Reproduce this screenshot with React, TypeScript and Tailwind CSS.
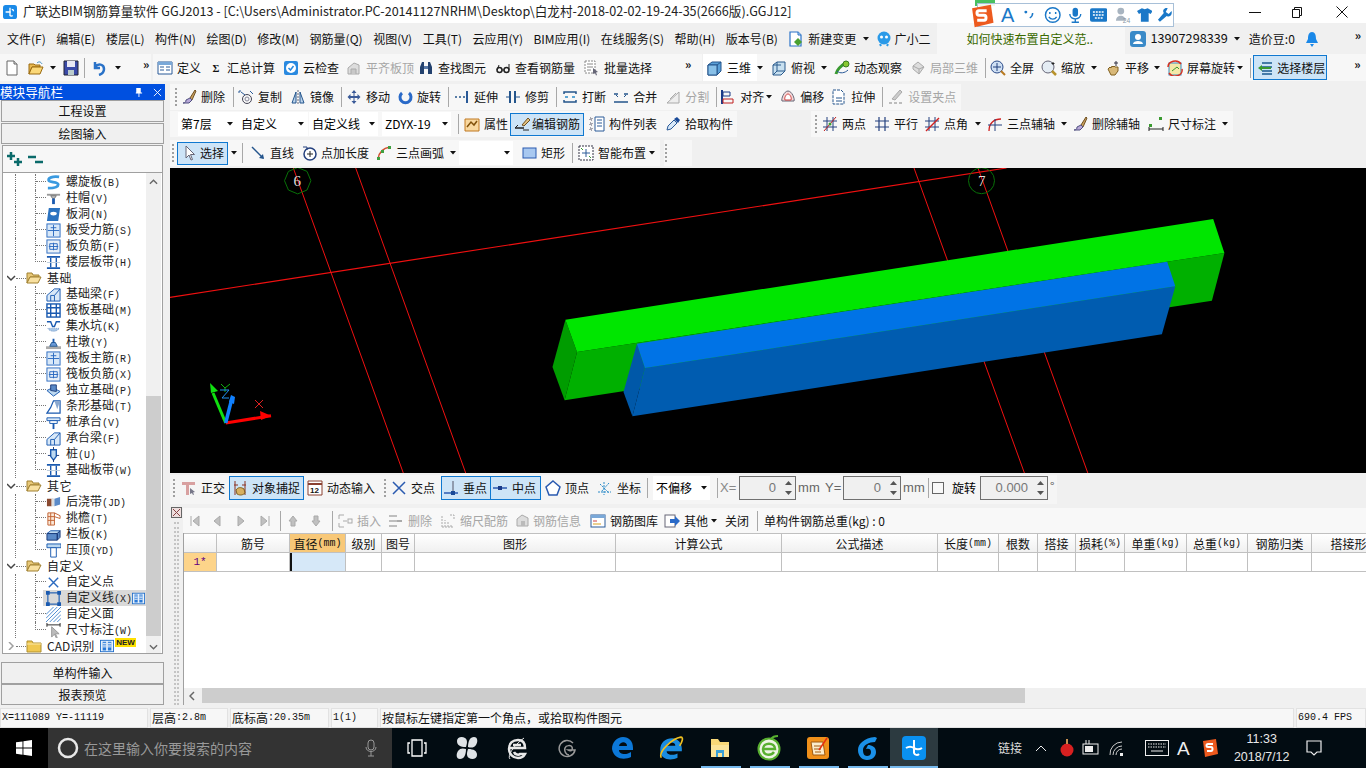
import React from "react";

const sans = "font-['Noto_Sans_CJK_SC','Liberation_Sans',sans-serif]";
const mono = "font-['Liberation_Mono',monospace]";

const icons: Record<string, React.ReactNode> = {
  new: <><path d="M3 1h7l3 3v11H3z" fill="#fff" stroke="#666"/><path d="M10 1v3h3" fill="#ddd" stroke="#666"/></>,
  chg: <><path d="M2 1h8l3 3v11H2z" fill="#fff" stroke="#2a72c8" strokeWidth="1.200"/><path d="M10 1v3h3" fill="#bcd8f0" stroke="#2a72c8"/><path d="M10 7l4 4-4 4-4-4z" fill="#4aa030"/></>,
  open: <><path d="M1 4h5l1 1h5v2H4L1 14z" fill="#e8b850" stroke="#9a6a10"/><path d="M1 14l3-7h11l-3 7z" fill="#fbd878" stroke="#9a6a10"/><path d="M9 3c2-2 4-1 5 1" stroke="#3a8ac0" fill="none"/></>,
  save: <><path d="M1 1h14v14H1z" fill="#3a4aa8" stroke="#223"/><path d="M4 1h8v6H4z" fill="#e8e8f4"/><path d="M5 10h6v5H5z" fill="#bcc" /></>,
  undo: <path d="M4 2v6h5M4 7c3-4 9-3 9 2 0 3-2 5-5 6" stroke="#2a72c8" strokeWidth="2.5" fill="none"/>,
  def: <><path d="M1 2h14v12H1z" fill="#fff" stroke="#2a5a98"/><path d="M1 2h14v3H1z" fill="#7aa8d8"/><path d="M3 7h4M3 10h4M9 7h4M9 10h4" stroke="#2a5a98"/></>,
  sigma: <text x="2" y="13" fontSize="14" fontWeight="700" fontFamily="Liberation Serif" fill="#111">Σ</text>,
  cloud: <><rect x="1" y="1" width="14" height="14" rx="2" fill="#2a8ae0"/><circle cx="8" cy="8" r="5" fill="#fff"/><path d="M5.5 8l2 2 3-4" stroke="#2a8ae0" strokeWidth="1.5" fill="none"/></>,
  flat: <><path d="M2 14V8l6-5 5 2v9z" fill="#ddd" stroke="#aaa"/><path d="M5 14V9h5v5" fill="#c8c8c8" stroke="#aaa"/></>,
  bino: <><path d="M2 14V7l2-5h2v12zM14 14V7l-2-5h-2v12z" fill="#23416e"/><path d="M6 6h4v3H6z" fill="#5a7aa8"/></>,
  glass: <><circle cx="4.5" cy="10" r="2.5" fill="none" stroke="#222" strokeWidth="1.5"/><circle cx="11.5" cy="10" r="2.5" fill="none" stroke="#222" strokeWidth="1.5"/><path d="M7 10h2M2 10l2-5M14 10V4" stroke="#222"/></>,
  batch: <><path d="M1 1h10v12H1z" fill="#fff" stroke="#888" strokeDasharray="2 1"/><path d="M3 4h6M3 7h6M3 10h4" stroke="#888"/><path d="M9 8l5 4-2 .5 1 2.500-1 .500-1-2.500-2 1z" fill="#667"/></>,
  cube: <><path d="M1 5l4-3h9v9l-4 4H1z" fill="#5aa0d8" stroke="#24558c"/><path d="M1 5h9v10M10 5l4-3" stroke="#24558c" fill="none"/><path d="M1 5h9v10H1z" fill="#88c0e8" stroke="#24558c"/></>,
  top: <><path d="M2 5l4-3h8v9l-4 4H2z" fill="#c8e0f0" stroke="#2a5a8c"/><path d="M6 2v9h8M6 11l-4 4" stroke="#2a5a8c" fill="none"/><path d="M2 5h8" stroke="#2a5a8c"/></>,
  orbit: <><path d="M2 14c1-5 6-9 11-12" stroke="#3a9a30" strokeWidth="3" fill="none"/><circle cx="12" cy="4" r="3" fill="#88c830" stroke="#3a7a20"/><path d="M3 11c3 3 8 2 11-1" stroke="#2a5a98" fill="none"/></>,
  local: <><path d="M3 6l5-4 6 5-5 7-6-5z" fill="#ddd" stroke="#aaa"/><path d="M3 6l6 3 5-2M9 9v5" stroke="#aaa" fill="none"/></>,
  full: <><circle cx="7" cy="7" r="6" fill="#cfe0f4" stroke="#2a4a88"/><path d="M7 3v8M3 7h8" stroke="#23407e"/><path d="M11 11l4 4" stroke="#b87a20" strokeWidth="2"/></>,
  zoom: <><circle cx="7" cy="7" r="6" fill="#e4ecf4" stroke="#667"/><path d="M11 11l4 4" stroke="#b8922a" strokeWidth="2.500"/><path d="M12 2v3M10.500 3.500h3" stroke="#222"/></>,
  pan: <><path d="M3 9l2-2 1 1 1-2 1 1 1-1 1 1 3 0v4l-3 4H6z" fill="#d8b878" stroke="#806020"/><path d="M11 1v5M9 3h4" stroke="#334"/></>,
  rot: <><rect x="2" y="3" width="12" height="12" fill="#f4e8a8" stroke="#3a8ac0"/><path d="M1 7a7 6 0 0 1 13-3M15 9a7 6 0 0 1-13 4" stroke="#d83020" strokeWidth="1.500" fill="none"/><path d="M5 11l5-4 2 2" stroke="#3a9a30" fill="none"/></>,
  layer: <><path d="M5 3h10M5 7h10M5 11h10M5 14h10" stroke="#1a5a90" strokeWidth="1.500"/><path d="M1 8l4-3v2h9v2H5v2z" fill="#3a9a30"/></>,
  brush: <><path d="M9 9l5-8 1 1-4 9z" fill="#c8a060" stroke="#705020"/><path d="M2 14c2 0 3-1 3-3l4-2 2 2-3 3z" fill="#b8a8d8" stroke="#505080"/></>,
  copy: <><path d="M1 2h2M1 2v2" stroke="#2a5a98"/><circle cx="9" cy="10" r="4.500" fill="none" stroke="#445"/><circle cx="9" cy="10" r="2" fill="none" stroke="#889"/><path d="M3 3l4 3M12 2l3 3" stroke="#2a5a98"/></>,
  mirror: <><path d="M8 1v14" stroke="#667" strokeDasharray="2 1"/><path d="M6 3v11H2z" fill="#bcd4ec" stroke="#24558c"/><path d="M10 3v11h4z" fill="#bcd4ec" stroke="#24558c"/></>,
  move: <><path d="M8 1l2.500 3h-2v3h3V5l3 3-3 3V9h-3v3h2L8 15l-2.500-3h2V9h-3v2l-3-3 3-3v2h3V4h-2z" fill="#3a5a98"/></>,
  rotate: <path d="M12 4a5.500 5.500 0 1 1-7 0" stroke="#2a6ac8" strokeWidth="3" fill="none" />,
  extend: <><path d="M1 8h2M5 8h2M9 8h2" stroke="#24558c" strokeWidth="1.500"/><path d="M13 2v12" stroke="#2a5a98" strokeWidth="2"/></>,
  trim: <><path d="M5 2v12M10 2v12" stroke="#24558c" strokeWidth="2"/><path d="M1 8h4M10 8h5" stroke="#24558c"/></>,
  brk: <><path d="M2 5v-2h12v2M2 11v2h12v-2" stroke="#24558c" strokeWidth="1.500" fill="none"/><path d="M3 8h3M10 8h3" stroke="#2a8ac8" strokeWidth="1.500"/></>,
  merge: <><path d="M1 13h14M1 5h4M11 5h4" stroke="#24558c" strokeWidth="1.500"/><path d="M5 8l-2-2M11 8l2-2" stroke="#24558c"/></>,
  split: <><path d="M2 14h12L14 3z" fill="#eee" stroke="#aaa"/><path d="M5 10l6-6" stroke="#aaa"/></>,
  align: <><path d="M2 1v14" stroke="#1a3a88" strokeWidth="2"/><path d="M3 3h7v4H3z" fill="none" stroke="#1a3a88"/><path d="M3 10h10v4H3z" fill="none" stroke="#c02020"/></>,
  offset: <><path d="M8 2c4 0 7 8 6 10H2C1 10 4 2 8 2z" fill="#f4d8d8" stroke="#667"/><path d="M8 5c2 0 4 4 3 6H5c-1-2 1-6 3-6z" fill="#fff" stroke="#d04040"/></>,
  stretch: <><path d="M2 1h8l3 3v11H2z" fill="#fff" stroke="#24558c" strokeDasharray="3 1"/><path d="M5 9h6M5 12h6" stroke="#24558c"/></>,
  grip: <><path d="M12 1l2 2-7 8-3-1z" fill="#ccc" stroke="#aaa"/><path d="M1 14h3M6 14h3M11 14h3" stroke="#aaa" strokeWidth="1.500"/></>,
  attr: <><path d="M1 3h14v12H1z" fill="#f8d8a0" stroke="#c07820"/><path d="M3 11l4-5 3 3 3-4" stroke="#80500a" strokeWidth="1.500" fill="none"/></>,
  edit: <><path d="M1 12h9" stroke="#222" strokeWidth="1.500"/><path d="M1 12l3-3" stroke="#222"/><path d="M8 9l6-7 2 2-6 6z" fill="#e0c080" stroke="#705020"/><path d="M9 14h6" stroke="#222"/></>,
  list: <><path d="M1 2h2v2H1zM1 7h2v2H1zM1 12h2v2H1z" fill="none" stroke="#556" strokeDasharray="1 1"/><path d="M6 1h9v14H6z" fill="#fff" stroke="#2a5a98"/><path d="M8 4h5M8 7h5M8 10h5" stroke="#2a5a98"/></>,
  pick: <><path d="M2 14l1-4 6-6 3 3-6 6z" fill="#d8e8f8" stroke="#2a5a98"/><path d="M9 3l3-2 3 3-2 3z" fill="#1a4a98"/></>,
  twop: <><path d="M1 5h14M1 11h14M5 1v14M11 1v14" stroke="#24407e"/><path d="M2 15L14 1" stroke="#c02020"/><circle cx="8" cy="8" r="1.500" fill="#3a9a30"/></>,
  para: <path d="M1 5h14M1 11h14M5 1v14M11 1v14" stroke="#24407e" strokeWidth="1.200"/>,
  angle: <><path d="M1 5h14M1 11h14M5 1v14M11 1v14" stroke="#24407e"/><path d="M2 15L15 2" stroke="#d02020" strokeWidth="1.500"/></>,
  arcx: <><path d="M2 15C2 7 7 3 14 3" stroke="#d02020" strokeWidth="1.300" fill="none"/><path d="M1 9h14M8 3v12" stroke="#24407e"/></>,
  dim: <><path d="M1 13h14M1 11v4M15 11v4" stroke="#222"/><rect x="1" y="8" width="3" height="3" fill="#3a9a30"/><rect x="11" y="1" width="3" height="3" fill="#3a9a30"/></>,
  cursor: <path d="M4 1v12l3-3 2 5 1.500-.5-2-5h4z" fill="#fff" stroke="#667"/>,
  line: <><path d="M2 2l11 11" stroke="#24558c" strokeWidth="1.500"/><path d="M14 14l-5-1 4-4z" fill="#24558c"/></>,
  ptlen: <><circle cx="9" cy="9" r="6" fill="#fff" stroke="#24407e" strokeWidth="1.500"/><path d="M9 6v6M6 9h6" stroke="#222"/><path d="M2 2h4v3" stroke="#24407e" fill="none"/></>,
  arc: <><path d="M2 14C3 7 7 3 14 2" stroke="#d05030" strokeWidth="1.500" fill="none"/><rect x="1" y="12" width="3" height="3" fill="#40a040"/><rect x="5" y="5" width="3" height="3" fill="#40a040"/><rect x="12" y="1" width="3" height="3" fill="#40a040"/></>,
  rect: <><rect x="2" y="3" width="13" height="10" fill="#a8c8f0" stroke="#2a5ab0"/></>,
  smart: <><rect x="1" y="1" width="14" height="14" fill="#fff" stroke="#334" strokeDasharray="2 1"/><path d="M8 4v8M4 8h8" stroke="#2a5a98"/><path d="M3 3l2 2M13 13l-2-2" stroke="#3a9a30"/></>,
  ortho: <><path d="M1 2h13v3H8v10H5V5H1z" fill="#d8a0a0"/><path d="M9 8l5 4-2 .5 1 2-1 .500-1-2-2 1z" fill="#778"/></>,
  snap: <><path d="M3 1v14M13 1v14" stroke="#8a3020" /><path d="M2 5h4M10 5h4" stroke="#8a3020"/><path d="M4 10c2-3 5-3 8-1l1 4c-3 3-6 2-8 1z" fill="#d8b060" stroke="#806020"/></>,
  dyn: <><path d="M1 1h14v14H1z" fill="#fff" stroke="#8a4030"/><path d="M1 4h14" stroke="#8a4030" strokeWidth="2"/><text x="3" y="13" fontSize="8" fontFamily="Liberation Sans" fontWeight="700" fill="#111">12</text></>,
  cross: <path d="M2 2l12 12M14 2L2 14" stroke="#2a5ab0" strokeWidth="1.500"/>,
  perp: <><path d="M1 13h14" stroke="#2a5ab0" strokeWidth="1.500"/><path d="M10 1v14" stroke="#556"/><rect x="8" y="11" width="4" height="4" fill="#1a4a98"/></>,
  mid: <><path d="M1 8h14" stroke="#2a5ab0" strokeWidth="1.500"/><rect x="6" y="6" width="4" height="4" fill="#1a3a88"/></>,
  vertex: <path d="M8 1l7 6-3 8H4L1 7z" fill="#fff" stroke="#2a5ab0" strokeWidth="1.500"/>,
  coord: <><path d="M1 12h13M7 2v13M3 4l9 9M12 3l-8 9" stroke="#2a8ac8" strokeDasharray="2 1"/></>,
  gallery: <><rect x="1" y="2" width="14" height="12" fill="#fff" stroke="#2a5a98"/><path d="M1 2h14v3H1z" fill="#7aa8d8"/><path d="M3 8h4" stroke="#d04040"/><path d="M3 11h8" stroke="#d8a020"/></>,
  other: <><rect x="1" y="2" width="10" height="12" fill="#fff" stroke="#667"/><path d="M6 6h5V3l5 5-5 5v-3H6z" fill="#2a6ac8"/></>,
  insert: <><path d="M2 2h5M2 14h5M2 2v4M2 10v4" stroke="#aaa"/><path d="M6 8h4" stroke="#aaa"/><rect x="11" y="6" width="4" height="4" fill="none" stroke="#aaa"/></>,
  remove: <><path d="M1 3h8M1 13h8M1 8h8" stroke="#aaa" strokeWidth="1.500"/><path d="M9 8h5" stroke="#aaa" strokeWidth="2"/></>,
  scale: <path d="M2 14V3M5 14V7M8 14V9M11 14v-2M2 14h12M10 2h4v4" stroke="#aaa" strokeDasharray="2 1" fill="none"/>,
  info: <><path d="M2 13V6l5-4 6 3v8z" fill="#ddd" stroke="#aaa"/><path d="M6 13V8h4v5" fill="#bbb"/></>,
  folderOpen: <><path d="M1 3h5l1 2h6v2H4L1 13z" fill="#e8c878" stroke="#a08030"/><path d="M1 13l3-6h11l-3 6z" fill="#f8e0a0" stroke="#a08030"/></>,
  folder: <><path d="M1 3h5l1 2h8v9H1z" fill="#f0c850" stroke="#b09030"/><path d="M1 6h14" stroke="#fbe8a8"/></>,
  spiral: <path d="M14 2C7 1 2 3 3 6c1 2 10 1 10 4s-6 4-11 4" stroke="#3a9ae0" strokeWidth="3" fill="none"/>,
  cap: <><path d="M1 3h14v2H1z" fill="#999"/><path d="M5 5h6l-2 3H7z" fill="#bbb" stroke="#777"/><path d="M8 8v6" stroke="#1a5ab0" strokeWidth="3"/></>,
  hole: <><path d="M3 1h12l-2 14H1z" fill="#2a72c0"/><ellipse cx="8" cy="7" rx="3.500" ry="2" fill="#fff"/></>,
  slabA: <><rect x="1" y="1" width="14" height="14" fill="#d8e8f8" stroke="#2a6ac0"/><path d="M8 2v12M2 8h12" stroke="#2a6ac0"/><path d="M5 5h6" stroke="#2a6ac0"/></>,
  slabB: <><rect x="1" y="1" width="14" height="14" fill="#e8f0f8" stroke="#2a6ac0"/><path d="M3 8h10M8 4v8M4 5h8v6H4z" stroke="#2a6ac0" fill="none"/></>,
  band: <><path d="M1 2h14M1 14h14" stroke="#1a5ab0" strokeWidth="2"/><path d="M5 3v10M11 3v10" stroke="#1a5ab0" strokeWidth="1.500"/><path d="M1 8h14" stroke="#bcd" /></>,
  beam: <><path d="M1 15V9L9 2h6v13z" fill="#d8e8f8" stroke="#1a5ab0"/><path d="M5 15V9h4v6M9 9l6-7" stroke="#1a5ab0" fill="none"/></>,
  raft: <><rect x="1" y="1" width="14" height="14" fill="#fff" stroke="#1a5ab0" strokeWidth="1.500"/><path d="M1 5h14M1 11h14M5 1v14M11 1v14" stroke="#1a5ab0" strokeWidth="1.500"/></>,
  sump: <><path d="M1 3h4l2 5h2l2-5h4" stroke="#1a5ab0" strokeWidth="1.500" fill="none"/><path d="M2 10c2 4 10 4 12 0z" fill="#a8c8e8" stroke="#7a9ac8" strokeDasharray="1 1"/></>,
  pier: <><path d="M0 12h16v3H0z" fill="#aaa"/><path d="M4 12l2-4h4l2 4z" fill="#6a9ad8" stroke="#24558c"/><path d="M7 4h2v4H7z" fill="#1a5ab0"/></>,
  iso: <><path d="M1 8l6-3 8 4-7 5z" fill="#bcd8f0" stroke="#1a5ab0"/><path d="M5 8V2h6v7z" fill="#5a8ac8" stroke="#1a3a78"/></>,
  strip: <><path d="M1 15l4-6 3-7h7v13z" fill="#fff" stroke="#1a5ab0" strokeWidth="1.300"/><path d="M9 2l6 0-3 9z" fill="#8aa8d0"/></>,
  pilecap: <><path d="M1 3h14v3H1z" fill="#d8e8f8" stroke="#1a5ab0"/><path d="M4 6h8v3H4z" fill="#fff" stroke="#1a5ab0"/><path d="M7 9h2v6H7z" fill="#1a5ab0"/></>,
  pile: <><path d="M5 3h6v7l-3 4-3-4z" fill="#bcd8f0" stroke="#1a5ab0" strokeWidth="1.500"/><path d="M8 0v3M8 13v3M2 9h3M11 9h3" stroke="#1a3a78"/></>,
  pour: <><path d="M1 4h5v8H1z" fill="#8a4a30"/><path d="M6 3l3 1v8H6z" fill="#ddd"/><path d="M9 4l6-2v8l-6 2z" fill="#5a8ac8"/></>,
  eave: <><path d="M2 2h7v13H2z" fill="#fbe8d8" stroke="#c06030"/><path d="M2 6h7M2 10h7M5 2v13M9 2l6 3v3l-6-2" stroke="#c06030" fill="none"/></>,
  rail: <><path d="M1 7l4-3h10l-3 3z" fill="#bcd8f0" stroke="#1a5ab0"/><path d="M1 7h11v7H1zM12 7l3-3v7l-3 3z" fill="#5a8ac8" stroke="#1a3a78"/></>,
  coping: <><path d="M1 1h15v4H1z" fill="#bcd8f0" stroke="#1a5ab0"/><path d="M5 5h6v10H5z" fill="#fff" stroke="#1a5ab0"/></>,
  xpt: <path d="M3 3l10 10M13 3L3 13" stroke="#2a6ac0" strokeWidth="1.500"/>,
  sel: <><rect x="2" y="2" width="12" height="12" fill="none" stroke="#1a5ab0" strokeWidth="1.200"/><path d="M0 0h4v4H0zM12 0h4v4h-4zM0 12h4v4H0zM12 12h4v4h-4z" fill="#1a5ab0"/></>,
  hatch: <path d="M0 8l8-8M0 12L12 0M0 16L16 0M4 16L16 4M8 16l8-8M12 16l4-4" stroke="#4a8ad0"/>,
  dimarrow: <><path d="M1 2h14M1 0v4M15 0v4" stroke="#222"/><path d="M6 4v11l3-3 2 4 1-.5-2-4h4z" fill="#bbb" stroke="#999"/></>,
  book: <><rect x="0.500" y="1.500" width="15" height="13" fill="#e8f2fc" stroke="#1a6ac8"/><path d="M3 3h4v10H3zM9 3h4v10H9z" fill="#2a7ad8"/><path d="M3 5h4M3 7h4M3 9h4M9 5h4M9 7h4M9 9h4" stroke="#fff"/></>,
};

function Ic({ n, c = "w-4 h-4" }: { n: string; c?: string }) {
  return <svg viewBox="0 0 16 16" className={`${c} shrink-0`}>{icons[n]}</svg>;
}

function Dd({ c = "" }: { c?: string }) {
  return <svg viewBox="0 0 6 4" className={`w-[6px] h-[4px] shrink-0 ${c}`}><path d="M0 0h6L3 3.500z" fill="#111" /></svg>;
}

function T({ i, l, dis, box, c = "" }: { i: string; l: string; dis?: boolean; box?: boolean; c?: string }) {
  return (
    <div className={`flex items-center h-[23px] gap-1 shrink-0 ${box ? "px-[3px] border border-[#0f78d0] bg-[#cde4f7]" : "px-1"} ${dis ? "text-[#a6a6a6]" : "text-[#111]"} ${c}`}>
      <Ic n={i} />
      <span className="whitespace-nowrap">{l}</span>
    </div>
  );
}

function Sep({ c = "" }: { c?: string }) {
  return <div className={`w-px h-[20px] bg-[#a8a8a8] shrink-0 ${c}`} />;
}

function Grip({ c = "" }: { c?: string }) {
  return <div className={`w-[2px] h-[18px] shrink-0 border-l-2 border-dotted border-[#a0a0a0] ${c}`} />;
}

function More({ c = "" }: { c?: string }) {
  return <span className={`text-[12px] leading-none font-bold text-[#111] shrink-0 -mt-2 ${c}`}>»</span>;
}

function Combo({ t, c, dd }: { t: string; c: string; dd: string }) {
  return (
    <div className={`flex items-center h-[24px] bg-white shrink-0 pl-[3px] ${c}`}>
      <span className="whitespace-nowrap">{t}</span>
      <Dd c={`ml-auto ${dd}`} />
    </div>
  );
}

function Row({ n, i, code, last, sel, extra }: { n: string; i: string; code?: string; last?: boolean; sel?: boolean; extra?: React.ReactNode }) {
  return (
    <div className="flex h-4 shrink-0 items-stretch">
      <div className="w-[12px] shrink-0" />
      <div className="w-[20px] shrink-0 border-l border-dotted border-[#777]" />
      <div className={`w-[11px] shrink-0 border-l border-dotted ${last ? "border-transparent" : "border-[#777]"}`}>
        <div className={`h-2 border-b border-dotted border-[#777] ${last ? "border-l -ml-px" : ""}`} />
      </div>
      <div className={`flex items-center flex-1 min-w-0 ${sel ? "bg-[#d9d9d9] -ml-[3px] pl-[3px]" : ""}`}>
        <Ic n={i} c="w-[15px] h-[15px]" />
        <span className="ml-[5px] whitespace-nowrap">{n}<span className={`${mono} text-[10px]`}>{code}</span></span>
        {extra}
      </div>
    </div>
  );
}

function FolderRow({ n, closed, extra }: { n: string; closed?: boolean; extra?: React.ReactNode }) {
  return (
    <div className="flex h-4 shrink-0 items-center">
      <svg viewBox="0 0 9 8" className="w-[9px] h-[8px] ml-[4px] shrink-0">
        <path d={closed ? "M2 0l4 4-4 4" : "M0 2l4 4 4-4"} fill="none" stroke={closed ? "#a0a0a0" : "#444"} strokeWidth="1.500" />
      </svg>
      <div className="w-[10px] h-0 border-t border-dotted border-[#777] shrink-0" />
      <Ic n={closed ? "folder" : "folderOpen"} />
      <span className={`ml-[5px] whitespace-nowrap ${closed ? "" : "tracking-[0.4px]"}`}>{n}</span>
      {extra}
    </div>
  );
}

function TitleBar() {
  return (
    <div className="h-[23px] bg-white flex items-center shrink-0 relative">
      <svg viewBox="0 0 16 16" className="w-[14px] h-[14px] ml-[3px] shrink-0">
        <rect width="16" height="16" rx="3" fill="#1a8ae8" />
        <path d="M8 3v9a2 2 0 0 0 3 0M3 8h6M12 7a2 2 0 0 0-2-2" stroke="#fff" strokeWidth="1.500" fill="none" />
      </svg>
      <span className="ml-[6px] text-[12.600px] whitespace-nowrap text-[#222]">广联达BIM钢筋算量软件 GGJ2013 - [C:\Users\Administrator.PC-20141127NRHM\Desktop\白龙村-2018-02-02-19-24-35(2666版).GGJ12]</span>
      <div className="ml-auto flex items-center shrink-0">
        <svg viewBox="0 0 12 12" className="w-3 h-3 mr-[30px]"><path d="M0 6.500h12" stroke="#111" /></svg>
        <svg viewBox="0 0 12 12" className="w-3 h-3 mr-[33px]"><path d="M1.500 3.500h7v8h-7zM3.500 3.500v-2h7v8h-2" fill="none" stroke="#111" /></svg>
        <svg viewBox="0 0 12 12" className="w-3 h-3 mr-[18px]"><path d="M.5.500l11 11M11.500.500l-11 11" stroke="#111" /></svg>
      </div>
    </div>
  );
}

function SogouBar() {
  return (
    <div className="absolute left-[967px] top-0 w-[208px] h-[28px] overflow-visible">
      <div className="absolute left-[8px] top-0 w-[20px] h-[6px] bg-[#48c060]" />
      <div className="absolute left-[10px] top-[3px] w-[197px] h-[24px] bg-white/90 border border-[#a8c0d8] flex items-center pl-[23px] gap-[7px] text-[#1a78c8]">
        <span className="text-[20px] leading-none font-['Liberation_Sans']">A</span>
        <svg viewBox="0 0 16 16" className="w-4 h-4"><circle cx="5" cy="5" r="1.500" fill="#1a78c8" /><path d="M12 6c0 3-1 4-3 5" stroke="#1a78c8" strokeWidth="1.500" fill="none" /></svg>
        <svg viewBox="0 0 18 18" className="w-[18px] h-[18px]"><circle cx="9" cy="9" r="7.500" fill="none" stroke="#1a78c8" strokeWidth="1.500" /><path d="M6 6v2M12 6v2M5 11c2 3 6 3 8 0" stroke="#1a78c8" strokeWidth="1.500" fill="none" /></svg>
        <svg viewBox="0 0 16 18" className="w-[15px] h-[18px]"><rect x="5" y="1" width="6" height="10" rx="3" fill="#1a78c8" /><path d="M2 8c0 7 12 7 12 0M8 13v4M4 17h8" stroke="#1a78c8" strokeWidth="1.500" fill="none" /></svg>
        <svg viewBox="0 0 18 14" className="w-[18px] h-[14px]"><rect width="18" height="14" rx="2" fill="#1a78c8" /><path d="M3 4h12M3 7h12M5 10h8" stroke="#fff" strokeWidth="1.500" strokeDasharray="2 1" /></svg>
        <svg viewBox="0 0 18 18" className="w-[18px] h-[18px]"><circle cx="7" cy="5" r="3.500" fill="#a8b4c0" /><path d="M2 15c0-7 10-7 10 0z" fill="#a8b4c0" /><text x="9" y="17" fontSize="7" fill="#8a98a8" fontFamily="Liberation Sans">24</text></svg>
        <svg viewBox="0 0 16 16" className="w-4 h-4 -ml-[2px]"><path d="M5 1l3 1 3-1 5 3-2 3-2-1v9H4V6L2 7 0 4z" fill="#1a78c8" /></svg>
        <svg viewBox="0 0 16 16" className="w-4 h-4 -ml-[2px]"><path d="M15 4l-3 3-3-2 2-4c-3-1-6 2-4 5l-6 7 2 2 7-6c3 2 6-1 5-5z" fill="#1a78c8" /></svg>
      </div>
      <svg viewBox="0 0 28 28" className="absolute left-[2px] top-[4px] w-[25px] h-[24px]">
        <path d="M3 5l22-4 3 21-22 5z" fill="#ed5a1e" />
        <path d="M20 8H11c-3 0-3 5 0 5h6c3 0 3 6 0 6H9" stroke="#fff" strokeWidth="3.500" fill="none" />
      </svg>
    </div>
  );
}

function MenuBar() {
  const items = ["文件(F)", "编辑(E)", "楼层(L)", "构件(N)", "绘图(D)", "修改(M)", "钢筋量(Q)", "视图(V)", "工具(T)", "云应用(Y)", "BIM应用(I)", "在线服务(S)", "帮助(H)", "版本号(B)"];
  return (
    <div className="h-[31px] flex items-center shrink-0 pl-[2px] text-[#111]">
      {items.map((m) => (
        <span key={m} className="px-[5px] whitespace-nowrap mr-[0.500px]">{m}</span>
      ))}
      <T i="chg" l="新建变更" c="ml-[1px]" />
      <Dd c="ml-[3px]" />
      <svg viewBox="0 0 16 16" className="w-4 h-4 ml-[7px] shrink-0"><circle cx="8" cy="7" r="6.500" fill="#2a9ae8" /><circle cx="5.500" cy="6" r="1.500" fill="#fff" /><circle cx="10.500" cy="6" r="1.500" fill="#fff" /><path d="M4 13l1 2M12 13l-1 2" stroke="#2a9ae8" strokeWidth="2" /></svg>
      <span className="ml-[2px] whitespace-nowrap">广小二</span>
      <div className="ml-[7px] w-[188px] h-[31px] bg-[#f7f7f7] flex items-center pl-[29px] text-[#3a6a00] whitespace-nowrap shrink-0">如何快速布置自定义范..</div>
      <svg viewBox="0 0 16 16" className="w-4 h-4 ml-[5px] shrink-0"><rect width="16" height="16" rx="3" fill="#3a8ac8" /><circle cx="8" cy="6" r="3" fill="#fff" /><path d="M3 13c0-4 10-4 10 0z" fill="#fff" /></svg>
      <span className="ml-[4px] text-[#111] text-[12.700px]">13907298339</span>
      <Dd c="ml-[6px]" />
      <span className="ml-[9px] whitespace-nowrap">造价豆:0</span>
      <svg viewBox="0 0 14 16" className="w-[14px] h-4 ml-[10px] shrink-0"><path d="M7 1c-3 0-4 3-4 7l-2 4h12l-2-4c0-4-1-7-4-7z" fill="#1a88e8" /><path d="M5 13h4l-2 3z" fill="#1a88e8" /></svg>
      <More c="ml-[36px]" />
    </div>
  );
}

function Toolbar1() {
  return (
    <div className="h-[27px] flex items-stretch shrink-0">
      <div className="w-[151px] bg-[#f7f7f7] flex items-center shrink-0 pl-1">
        <Ic n="new" />
        <Ic n="open" c="w-4 h-4 ml-[8px]" />
        <Dd c="ml-[6px]" />
        <Ic n="save" c="w-4 h-4 ml-[7px]" />
        <Sep c="ml-[5px]" />
        <Ic n="undo" c="w-4 h-4 ml-[6px]" />
        <Dd c="ml-[8px]" />
        <More c="ml-[22px]" />
      </div>
      <div className="w-[549px] ml-[2px] bg-[#f7f7f7] flex items-center shrink-0">
        <T i="def" l="定义" />
        <T i="sigma" l="汇总计算" c="ml-[2px] [&>svg]:w-[12px] -mr-[2px]" />
        <T i="cloud" l="云检查" c="ml-[2px]" />
        <T i="flat" l="平齐板顶" dis c="-ml-[1px] -mr-[2px]" />
        <T i="bino" l="查找图元" c="-ml-[2px]" />
        <T i="glass" l="查看钢筋量" c="ml-[1px]" />
        <T i="batch" l="批量选择" c="ml-[1px]" />
        <More c="ml-[29px]" />
      </div>
      <div className="flex-1 ml-[1px] bg-[#f7f7f7] flex items-center min-w-0">
        <div className="flex items-center bg-white h-[27px] pr-[2px]"><T i="cube" l="三维" /></div>
        <Dd />
        <T i="top" l="俯视" c="ml-[4px]" />
        <Dd c="ml-[2px]" />
        <T i="orbit" l="动态观察" c="ml-[3px]" />
        <T i="local" l="局部三维" dis />
        <Sep c="ml-[3px]" />
        <T i="full" l="全屏" />
        <T i="zoom" l="缩放" c="-ml-[1px]" />
        <Dd c="ml-[2px]" />
        <T i="pan" l="平移" c="ml-[4px]" />
        <Dd c="ml-[1px]" />
        <T i="rot" l="屏幕旋转" c="ml-[3px] -mr-[2px]" />
        <Dd />
        <Sep c="ml-[7px]" />
        <T i="layer" l="选择楼层" box c="!h-[25px] ml-[2px] w-[74px]" />
        <More c="ml-[27px]" />
      </div>
    </div>
  );
}

function Panel() {
  return (
    <div className="w-[165px] shrink-0 flex flex-col h-[621px] text-[#111]">
      <div className="h-4 bg-[#0050e0] text-white flex items-center shrink-0">
        <span className="text-[12.600px] leading-none whitespace-nowrap">模块导航栏</span>
        <svg viewBox="0 0 10 12" className="w-[9px] h-[11px] ml-[71px]"><path d="M2.500 1h5v5h1.500v1h-3v4h-1V7h-3V6H2.500z" fill="#fff" /></svg>
        <svg viewBox="0 0 10 10" className="w-[9px] h-[9px] ml-[10px]"><path d="M1 1l8 8M9 1l-8 8" stroke="#fff" /></svg>
      </div>
      <div className="h-[22px] border border-[#a0a0a0] bg-[#f0f0f0] flex items-center justify-center shrink-0 mx-[1px]">工程设置</div>
      <div className="h-[21px] mt-px border border-[#a0a0a0] bg-[#f0f0f0] flex items-center justify-center shrink-0 mx-[1px]">绘图输入</div>
      <div className="mx-[2px] mt-[1px] h-[27px] bg-[#f7f7f7] border-x border-t border-[#a0a0a0] flex items-center pl-[4px] shrink-0">
        <svg viewBox="0 0 16 16" className="w-4 h-4"><path d="M4 1v8M0 5h8M11 7v8M7 11h8" stroke="#0a6a6a" strokeWidth="2.500" /></svg>
        <svg viewBox="0 0 16 16" className="w-4 h-4 ml-[5px]"><path d="M0 6h8M7 11h8" stroke="#0a6a6a" strokeWidth="2.500" /></svg>
      </div>
      <div className="mx-[2px] h-[482px] bg-white border border-[#a0a0a0] flex shrink-0 overflow-hidden">
        <div className="w-[143px] shrink-0 overflow-hidden flex flex-col text-[12px] leading-4 pt-[1px] text-[#222]">
          <Row n="螺旋板" code="(B)" i="spiral" />
          <Row n="柱帽" code="(V)" i="cap" />
          <Row n="板洞" code="(N)" i="hole" />
          <Row n="板受力筋" code="(S)" i="slabA" />
          <Row n="板负筋" code="(F)" i="slabB" />
          <Row n="楼层板带" code="(H)" i="band" last />
          <FolderRow n="基础" />
          <Row n="基础梁" code="(F)" i="beam" />
          <Row n="筏板基础" code="(M)" i="raft" />
          <Row n="集水坑" code="(K)" i="sump" />
          <Row n="柱墩" code="(Y)" i="pier" />
          <Row n="筏板主筋" code="(R)" i="slabA" />
          <Row n="筏板负筋" code="(X)" i="slabB" />
          <Row n="独立基础" code="(P)" i="iso" />
          <Row n="条形基础" code="(T)" i="strip" />
          <Row n="桩承台" code="(V)" i="pilecap" />
          <Row n="承台梁" code="(F)" i="beam" />
          <Row n="桩" code="(U)" i="pile" />
          <Row n="基础板带" code="(W)" i="band" last />
          <FolderRow n="其它" />
          <Row n="后浇带" code="(JD)" i="pour" />
          <Row n="挑檐" code="(T)" i="eave" />
          <Row n="栏板" code="(K)" i="rail" />
          <Row n="压顶" code="(YD)" i="coping" last />
          <FolderRow n="自定义" />
          <Row n="自定义点" i="xpt" />
          <Row n="自定义线" code="(X)" i="sel" sel extra={<Ic n="book" c="w-[13px] h-[13px]" />} />
          <Row n="自定义面" i="hatch" />
          <Row n="尺寸标注" code="(W)" i="dimarrow" last />
          <FolderRow
            n="CAD识别"
            closed
            extra={
              <div className="flex items-start ml-[6px] shrink-0">
                <Ic n="book" c="w-[14px] h-[14px]" />
                <span className="ml-[1px] -mt-[1px] h-[9px] leading-[9px] px-[1px] bg-[#ffe000] text-[#222] text-[8px] font-bold font-['Liberation_Sans']">NEW</span>
              </div>
            }
          />
        </div>
        <div className="w-[15px] shrink-0 bg-[#f0f0f0] flex flex-col items-center">
          <svg viewBox="0 0 10 6" className="w-[9px] h-[6px] mt-[6px] shrink-0"><path d="M1 5l4-4 4 4" stroke="#666" strokeWidth="1.500" fill="none" /></svg>
          <div className="w-full h-[240px] bg-[#cdcdcd] mt-[211px] shrink-0" />
          <svg viewBox="0 0 10 6" className="w-[9px] h-[6px] mt-[8px] shrink-0"><path d="M1 1l4 4 4-4" stroke="#666" strokeWidth="1.500" fill="none" /></svg>
        </div>
      </div>
      <div className="h-[8px] shrink-0" />
      <div className="h-[22px] border border-[#a0a0a0] bg-[#f0f0f0] flex items-center justify-center shrink-0 mx-[1px]">单构件输入</div>
      <div className="h-[21px] border border-[#a0a0a0] bg-[#f0f0f0] flex items-center justify-center shrink-0 mx-[1px]">报表预览</div>
    </div>
  );
}

function Canvas() {
  return (
    <div className="h-[305px] bg-black shrink-0">
      <svg viewBox="170 168 1196 305" className="w-[1196px] h-[305px] block">
        <g stroke="#f01010" strokeWidth="1" fill="none">
          <path d="M170 297.300L1006.500 168" strokeWidth="1.200" />
          <path d="M293.300 168L403.300 473M355.700 168L465.700 473M914 168L1024.400 473M978 168L1087.800 473" />
        </g>
        <path d="M297.700 167.500l9.300 3.900 3.900 9.300-3.900 9.300-9.300 3.900-9.300-3.900-3.900-9.300 3.900-9.300z" fill="none" stroke="#087008" />
        <ellipse cx="981.500" cy="180.700" rx="13" ry="13" fill="none" stroke="#087008" />
        <text x="293.500" y="186" fontSize="15" fill="#ddd" fontFamily="Liberation Serif">6</text>
        <text x="978" y="186" fontSize="15" fill="#ddd" fontFamily="Liberation Serif">7</text>
        <polygon points="565.400,319.700 577,352 564.600,400.300 552.500,367" fill="#009c00" />
        <polygon points="577,352 1224.400,253 1211.900,300.700 564.600,400.300" fill="#00b000" />
        <polygon points="565.400,319.700 1213.200,219 1224.400,253 577,352" fill="#00e600" />
        <polygon points="636.900,343.700 644.900,368 632.400,416.300 623.500,392" fill="#0058a8" />
        <polygon points="644.900,368 1175.300,286.300 1161.900,334.300 632.400,416.300" fill="#005cb0" />
        <polygon points="636.900,343.700 1167.200,261.700 1175.300,286.300 644.900,368" fill="#0073e6" />
        <path d="M225.700 423L271 415.700" stroke="#ff0000" strokeWidth="3" />
        <polygon points="260,411 271,415.700 261,420" fill="#ff0000" />
        <path d="M225.700 423L213 393" stroke="#10e010" strokeWidth="3" />
        <polygon points="210,383 218,391 211,393" fill="#10e010" />
        <path d="M225.700 423L232 398" stroke="#1080ff" strokeWidth="3.500" />
        <polygon points="231,395 235,397 234,404 229,402" fill="#1080ff" />
        <path d="M255 400l8 8M263 400l-8 8" stroke="#e02020" />
        <path d="M221 384l4 4 5-4M225 388v4" stroke="#10b010" fill="none" />
        <path d="M220 390h9l-7 8h7" stroke="#2090f0" fill="none" />
      </svg>
    </div>
  );
}

function SpinInput({ v, c }: { v: string; c: string }) {
  return (
    <div className={`h-[24px] border border-[#707070] flex items-center justify-end shrink-0 bg-[#f0f0f0] ${c}`}>
      <span className="text-[#777] text-[13px] font-['Liberation_Sans'] mr-[9px]">{v}</span>
      <svg viewBox="0 0 7 16" className="w-[7px] h-4 mr-[3px] shrink-0"><path d="M0 5l3.500-4L7 5zM0 11h7l-3.500 4z" fill="#555" /></svg>
    </div>
  );
}

function SnapBar() {
  return (
    <div className="h-[31px] flex items-center shrink-0 bg-[#f0f0f0]">
      <div className="w-[887px] h-[29px] mt-[2px] pb-[4px] bg-[#f5f5f5] flex items-center shrink-0 pl-[3px]">
        <Grip />
        <T i="ortho" l="正交" c="ml-[2px]" />
        <T i="snap" l="对象捕捉" box c="!px-[2px] !h-[24px] w-[75px]" />
        <T i="dyn" l="动态输入" c="ml-[-1px]" />
        <Grip c="ml-[5px]" />
        <T i="cross" l="交点" c="ml-[1px] !gap-[4px]" />
        <T i="perp" l="垂点" box c="!h-[24px] !px-[1px] ml-[2px] w-[50px]" />
        <T i="mid" l="中点" box c="!h-[24px] !px-[1px] w-[51px] -ml-px" />
        <T i="vertex" l="顶点" />
        <T i="coord" l="坐标" />
        <Sep c="ml-[2px]" />
        <Combo t="不偏移" c="w-[57px] ml-[5px]" dd="mr-[3px]" />
        <Sep c="ml-[7px]" />
        <span className="ml-[2px] text-[#888] text-[13px] font-['Liberation_Sans'] w-[19px] shrink-0">X=</span>
        <SpinInput v="0" c="w-[57px]" />
        <span className="ml-[2px] text-[#666] text-[13px] font-['Liberation_Sans'] w-[27px] shrink-0">mm</span>
        <span className="text-[#666] text-[13px] font-['Liberation_Sans'] w-[18px] shrink-0">Y=</span>
        <SpinInput v="0" c="w-[58px]" />
        <span className="ml-[2px] text-[#666] text-[13px] font-['Liberation_Sans'] w-[25px] shrink-0">mm</span>
        <Sep />
        <div className="w-[12px] h-[12px] ml-[3px] border border-[#666] bg-[#f8f8f8] shrink-0" />
        <span className="ml-[8px] whitespace-nowrap">旋转</span>
        <SpinInput v="0.000" c="w-[68px] ml-[4px]" />
        <span className="ml-[2px] -mt-1 text-[#555]">°</span>
      </div>
    </div>
  );
}

function Nav({ d, c = "" }: { d: string; c?: string }) {
  return <svg viewBox="0 0 12 12" className={`w-3 h-3 shrink-0 ${c}`}><path d={d} fill="#c0c0c0" stroke="#aaa" /></svg>;
}

function RebarBar() {
  return (
    <div className="h-[25px] ml-[13px] bg-[#f8f8f8] flex items-center shrink-0 pl-[6px]">
      <Nav d="M2 1v10M10 1L4 6l6 5z" />
      <Nav d="M9 1L3 6l6 5z" c="ml-[10px]" />
      <Nav d="M3 1l6 5-6 5z" c="ml-[12px]" />
      <Nav d="M10 1v10M2 1l6 5-6 5z" c="ml-[12px]" />
      <Sep c="ml-[9px] mr-[6px]" />
      <Nav d="M6 1l4 5H8v5H4V6H2z" />
      <Nav d="M6 11l4-5H8V1H4v5H2z" c="ml-[11px]" />
      <Sep c="ml-[10px]" />
      <T i="insert" l="插入" dis />
      <T i="remove" l="删除" dis c="-ml-[1px]" />
      <T i="scale" l="缩尺配筋" dis />
      <T i="info" l="钢筋信息" dis c="!gap-[2px] -ml-[1px]" />
      <T i="gallery" l="钢筋图库" c="ml-[1px]" />
      <T i="other" l="其他" c="-ml-[2px]" />
      <Dd c="-ml-[1px]" />
      <span className="ml-[8px] text-[#111] whitespace-nowrap">关闭</span>
      <Sep c="ml-[8px]" />
      <span className="ml-[6px] text-[#111] whitespace-nowrap">单构件钢筋总重(kg) : 0</span>
    </div>
  );
}

const cols: [string, string, string?][] = [
  ["筋号", "w-[73px]"],
  ["直径", "w-[56px]", "(mm)"],
  ["级别", "w-[36px]"],
  ["图号", "w-[33px]"],
  ["图形", "w-[201px]"],
  ["计算公式", "w-[166px]"],
  ["公式描述", "w-[156px]"],
  ["长度", "w-[61px]", "(mm)"],
  ["根数", "w-[39px]"],
  ["搭接", "w-[38px]"],
  ["损耗", "w-[49px]", "(%)"],
  ["单重", "w-[62px]", "(kg)"],
  ["总重", "w-[61px]", "(kg)"],
  ["钢筋归类", "w-[64px]"],
  ["搭接形式", "w-[86px]"],
];

function Table() {
  return (
    <div className="flex-1 flex min-h-0 bg-white">
      <div className="w-[13px] shrink-0 bg-[#f0f0f0] flex flex-col items-center">
        <svg viewBox="0 0 11 11" className="w-[11px] h-[11px] -mt-[26px] shrink-0"><rect x=".5" y=".5" width="10" height="10" fill="#eedede" stroke="#666" /><path d="M2 2l7 7M9 2L2 9" stroke="#844" /></svg>
        <div className="w-[5px] flex-1 mt-[4px] border-x-2 border-dotted border-[#c4c4c4]" />
      </div>
      <div className="flex-1 min-w-0 flex flex-col border-l border-[#a0a0a0]">
        <div className="flex-1 min-h-0 flex flex-col overflow-hidden">
          <div className="flex h-[20px] shrink-0 border-y border-[#c0c0c0] bg-gradient-to-b from-white to-[#f0f0f0]">
            <div className="w-[33px] shrink-0 border-r border-[#c0c0c0]" />
            {cols.map(([a, w, u]) => (
              <div key={a} className={`${w} shrink-0 border-r border-[#c0c0c0] flex items-center justify-center pt-[1px] whitespace-nowrap overflow-hidden text-[#111] ${a === "直径" ? "bg-[#f8c878]" : ""}`}>
                {a}
                {u && <span className={`${mono} text-[10px]`}>{u}</span>}
              </div>
            ))}
          </div>
          <div className="flex h-[19px] shrink-0 border-b border-[#c0c0c0]">
            <div className={`w-[33px] shrink-0 border-r border-[#c0c0c0] bg-[#fdd48a] text-[#600080] flex items-center justify-center pt-[1px] ${mono} text-[11px]`}>1*</div>
            {cols.map(([a, w]) => (
              <div key={a} className={`${w} shrink-0 border-r border-[#c0c0c0] ${a === "直径" ? "bg-[#d6e8f8] border-l-2 border-l-[#111]" : ""}`} />
            ))}
          </div>
        </div>
        <div className="h-[17px] shrink-0 bg-[#f0f0f0] flex items-start">
          <svg viewBox="0 0 6 10" className="w-[6px] h-[10px] ml-[5px] mt-[3px] shrink-0"><path d="M5 1L1 5l4 4" stroke="#666" strokeWidth="1.500" fill="none" /></svg>
          <div className="h-[15px] w-[823px] ml-[7px] bg-[#cdcdcd] shrink-0" />
        </div>
      </div>
    </div>
  );
}

function Status() {
  return (
    <div className="h-[20px] mt-[3px] flex gap-[2px] shrink-0 text-[#111]">
      <div className={`w-[148px] bg-[#f7f7f7] border border-[#e2e2e2] flex items-center pl-[1px] ${mono} text-[10px] whitespace-nowrap`}>X=111089 Y=-11119</div>
      <div className="w-[78px] bg-[#f7f7f7] border border-[#e2e2e2] flex items-center pl-[1px] whitespace-nowrap">层高<span className={`${mono} text-[10px]`}>:2.8m</span></div>
      <div className="w-[99px] bg-[#f7f7f7] border border-[#e2e2e2] flex items-center pl-[1px] whitespace-nowrap">底标高<span className={`${mono} text-[10px]`}>:20.35m</span></div>
      <div className={`w-[47px] bg-[#f7f7f7] border border-[#e2e2e2] flex items-center pl-[1px] ${mono} text-[10px]`}>1(1)</div>
      <div className="w-[914px] bg-[#f7f7f7] border border-[#e2e2e2] flex items-center pl-[1px] whitespace-nowrap">按鼠标左键指定第一个角点，或拾取构件图元</div>
      <div className={`flex-1 bg-[#f7f7f7] border border-[#e2e2e2] flex items-center pl-[1px] ${mono} text-[10px] whitespace-nowrap`}>690.4 FPS</div>
    </div>
  );
}

function Tk({ c = "", on, children }: { c?: string; on?: boolean; children: React.ReactNode }) {
  return (
    <div className={`w-[49px] h-10 shrink-0 flex items-center justify-center relative ${c}`}>
      {children}
      {on && <div className="absolute bottom-0 left-[6px] right-[3px] h-[2px] bg-[#76b9ed]" />}
    </div>
  );
}

function Taskbar() {
  return (
    <div className="h-10 bg-[#020c12] flex items-center shrink-0 text-white">
      <div className="w-[48px] h-10 bg-black flex items-center justify-center shrink-0">
        <svg viewBox="0 0 16 16" className="w-4 h-4"><path d="M0 2.300l6.500-.9v6.200H0zM7.400 1.300L16 0v7.600H7.400zM0 8.500h6.500v6.200L0 13.800zM7.400 8.500H16V16l-8.600-1.200z" fill="#fff" /></svg>
      </div>
      <div className="w-[344px] h-10 bg-[#333333] flex items-center shrink-0 pl-[9px]">
        <svg viewBox="0 0 22 22" className="w-[22px] h-[22px] shrink-0"><circle cx="11" cy="11" r="9" fill="none" stroke="#e8e8e8" strokeWidth="2.500" /></svg>
        <span className="ml-[5px] text-[14px] text-[#999] whitespace-nowrap">在这里输入你要搜索的内容</span>
        <svg viewBox="0 0 12 18" className="w-3 h-[18px] ml-[113px] shrink-0"><rect x="3" y="1" width="6" height="10" rx="3" fill="none" stroke="#999" /><path d="M1 8c0 6 10 6 10 0M6 13v4M3 17h6" stroke="#999" fill="none" /></svg>
      </div>
      <Tk c="!w-[50px]"><svg viewBox="0 0 20 18" className="w-5 h-[18px]"><path d="M5 1h10v16H5zM3 4H1v10h2M17 4h2v10h-2" fill="none" stroke="#fff" strokeWidth="1.300" /></svg></Tk>
      <Tk c="!w-[50px]"><svg viewBox="0 0 22 24" className="w-[22px] h-6"><path d="M10 11C4 11 1 9 1 5s5-5 8-3 2 6 1 9zM12 11c0-6 2-10 6-10s4 5 2 8-5 3-8 2zM12 13c6 0 9 2 9 6s-5 5-8 3-2-6-1-9zM10 13c0 6-2 10-6 10s-4-5-2-8 5-3 8-2z" fill="#dfe3e6" /></svg></Tk>
      <Tk c="!w-[50px]"><svg viewBox="0 0 22 26" className="w-[22px] h-[26px]"><path d="M3 13h16c0-6-3-8-7-8-5 0-9 3-9 9 0 5 4 9 9 9 4 0 6-2 7-4h-5c-1 1-5 1-6-2M7 10h8" stroke="#e8e8e8" strokeWidth="2.500" fill="none" /><path d="M4 24c-3-3 3-13 14-21" stroke="#e8e8e8" fill="none" /></svg></Tk>
      <Tk c="!w-[50px]"><svg viewBox="0 0 20 20" className="w-5 h-5"><path d="M16 5a8 8 0 1 0 2 7h-7c3 2 5 0 4-3-1-2-6-2-7 1s1 7 4 7" stroke="#999" fill="none" strokeWidth="1.500" /></svg></Tk>
      <Tk c="ml-[5px]"><svg viewBox="0 0 24 24" className="w-6 h-6"><path d="M2 13C2 6 7 1 13 1c6 0 10 4 10 11v2H9c0 5 8 5 12 2v5c-6 3-17 3-19-8zM9 10h8c0-5-7-5-8 0z" fill="#0c78d8" /></svg></Tk>
      <Tk><svg viewBox="0 0 24 24" className="w-[26px] h-[26px]"><path d="M2 14C2 7 7 3 13 3c5 0 9 4 9 10v2H8c0 4 7 4 10 2v4c-6 3-16 2-16-7zM8 10h8c0-4-7-4-8 0z" fill="#1a8ce0" /><path d="M3 21C0 15 14 3 21 2c3 0 1 5-1 8" stroke="#f0c020" strokeWidth="1.500" fill="none" /></svg></Tk>
      <Tk on><svg viewBox="0 0 22 22" className="w-[22px] h-[22px]"><path d="M2 2h7l2 3h9v15H2z" fill="#f8d878" /><path d="M2 8h18v12H2z" fill="#fbe49a" /><path d="M7 13h8v7h-2v-4H9v4H7z" fill="#3aa0d8" /></svg></Tk>
      <Tk on><svg viewBox="0 0 24 26" className="w-6 h-[26px]"><circle cx="12" cy="14" r="10.500" fill="#eef4e4" stroke="#58b030" strokeWidth="2" /><path d="M6 14h12c0-7-12-7-12 0s8 7 11 3" stroke="#58b030" strokeWidth="2.500" fill="none" /><path d="M14 4c2-3 5-3 7-3" stroke="#58b030" strokeWidth="2" fill="none" /></svg></Tk>
      <Tk on><svg viewBox="0 0 24 24" className="w-6 h-6"><rect x="1" y="1" width="22" height="22" rx="3" fill="#f0901a" /><path d="M5 6h12l2 13H7z" fill="#fbeccc" stroke="#a05a10" /><path d="M8 10h7M8 13h7M9 16h6" stroke="#a05a10" /><path d="M13 14L21 2" stroke="#e83010" strokeWidth="1.500" /></svg></Tk>
      <Tk on><svg viewBox="0 0 24 26" className="w-6 h-[26px]"><path d="M20 2C9 3 3 9 3 15c0 6 4 10 9 10 6 0 9-4 9-8 0-5-4-7-8-7l-2 4c3-1 5 0 5 3s-2 4-4 4c-3 0-4-3-4-6 0-5 6-8 12-8l2-4z" fill="#1a90e8" /></svg></Tk>
      <div className="w-[48px] h-10 bg-[#2c3a40] flex items-center justify-center relative shrink-0 -ml-[1px]">
        <svg viewBox="0 0 24 24" className="w-6 h-6"><rect width="24" height="24" rx="4" fill="#0a90f0" /><path d="M12 4v13a3 3 0 0 0 5 1M4 12c3-2 5-2 8 0s5 2 8 0" stroke="#fff" strokeWidth="2" fill="none" /></svg>
        <div className="absolute bottom-0 left-0 right-0 h-[2px] bg-[#76b9ed]" />
      </div>
      <span className="ml-[60px] text-[12px] text-[#ddd] whitespace-nowrap shrink-0">链接</span>
      <svg viewBox="0 0 12 8" className="w-3 h-2 ml-[13px] shrink-0"><path d="M1 7l5-5 5 5" stroke="#eee" fill="none" /></svg>
      <svg viewBox="0 0 14 20" className="w-[14px] h-5 ml-[13px] shrink-0"><circle cx="7" cy="12" r="6.500" fill="#d82020" /><path d="M7 1v5" stroke="#c89050" strokeWidth="2" /></svg>
      <svg viewBox="0 0 18 16" className="w-[18px] h-4 ml-[8px] shrink-0"><path d="M4 0v4M7 0v4" stroke="#eee" /><rect x="1" y="4" width="15" height="10" fill="none" stroke="#eee" /><rect x="3" y="6" width="8" height="6" fill="#eee" /></svg>
      <svg viewBox="0 0 18 18" className="w-[18px] h-[18px] ml-[7px] shrink-0"><path d="M3 16A12 12 0 0 1 15 3M6 16A9 9 0 0 1 15 7M9 16A6 6 0 0 1 15 10" stroke="#ccc" fill="none" /><rect x="13" y="14" width="3" height="3" fill="#eee" /></svg>
      <svg viewBox="0 0 24 16" className="w-6 h-4 ml-[20px] shrink-0"><rect x=".5" y=".5" width="23" height="15" fill="none" stroke="#eee" /><path d="M3 4h18M3 7h18" stroke="#eee" strokeDasharray="1.500 1" /><path d="M6 11h12" stroke="#eee" /></svg>
      <span className="ml-[8px] text-[19px] leading-none text-[#eee] font-['Liberation_Sans'] shrink-0">A</span>
      <svg viewBox="0 0 16 20" className="w-4 h-5 ml-[12px] shrink-0"><path d="M1 3l13-2 2 15-13 3z" fill="#ed5a1e" /><path d="M11 6H6c-2 0-2 3 0 3h3c2 0 2 4 0 4H5" stroke="#fff" strokeWidth="2" fill="none" /></svg>
      <div className="w-[62px] ml-[13px] flex flex-col items-center text-[12.500px] leading-[18px] text-[#e8e8e8] shrink-0 font-['Liberation_Sans']">
        <span>11:33</span>
        <span>2018/7/12</span>
      </div>
      <svg viewBox="0 0 16 16" className="w-4 h-4 ml-[13px] shrink-0"><path d="M1 1h14v11h-4l-3 3-3-3H1z" fill="none" stroke="#eee" strokeWidth="1.200" /></svg>
    </div>
  );
}

export default function App() {
  return (
    <div className={`relative w-[1366px] h-[768px] overflow-hidden flex flex-col bg-[#f0f0f0] text-[12px] leading-none ${sans}`}>
      <TitleBar />
      <MenuBar />
      <Toolbar1 />
      <div className="h-[3px] shrink-0" />
      <div className="flex h-[621px] shrink-0">
        <Panel />
        <div className="w-[5px] shrink-0" />
        <div className="flex-1 min-w-0 flex flex-col">
          <div className="h-[26px] w-[791px] bg-[#f7f7f7] flex items-center shrink-0 pl-[6px] text-[#111]">
            <Grip c="-ml-[1px] mr-[1px]" />
            <T i="brush" l="删除" c="-ml-[1px] mr-[1px]" />
            <Sep c="ml-[3px]" />
            <T i="copy" l="复制" />
            <T i="mirror" l="镜像" />
            <Sep c="ml-[3px]" />
            <T i="move" l="移动" />
            <T i="rotate" l="旋转" c="-ml-[1px]" />
            <Sep c="ml-[3px]" />
            <T i="extend" l="延伸" c="ml-[1px]" />
            <T i="trim" l="修剪" c="-ml-[1px]" />
            <Sep c="ml-[3px]" />
            <T i="brk" l="打断" c="ml-[1px]" />
            <T i="merge" l="合并" c="-ml-[1px]" />
            <T i="split" l="分割" dis />
            <Sep c="ml-[3px]" />
            <T i="align" l="对齐" c="-ml-[1px] !pr-[2px]" />
            <Dd c="mr-[3px]" />
            <T i="offset" l="偏移" c="ml-[1px]" />
            <T i="stretch" l="拉伸" c="-ml-[1px]" />
            <Sep c="ml-[3px]" />
            <T i="grip" l="设置夹点" dis c="ml-[1px]" />
          </div>
          <div className="h-[26px] mt-[1px] flex items-center shrink-0">
            <div className="w-[567px] h-[26px] bg-[#f7f7f7] flex items-center shrink-0 pl-[8px]">
              <Combo t="第7层" c="w-[60px]" dd="mr-[5px]" />
              <Combo t="自定义" c="w-[70px]" dd="mr-[4px]" />
              <Combo t="自定义线" c="w-[69px] ml-[1px]" dd="mr-[3px]" />
              <Combo t="ZDYX-19" c="w-[69px] ml-[4px]" dd="mr-[3px]" />
              <Sep c="ml-[7px]" />
              <T i="attr" l="属性" c="ml-[1px]" />
              <T i="edit" l="编辑钢筋" box c="-ml-[2px] w-[74px] !gap-[2px]" />
              <T i="list" l="构件列表" c="ml-[1px]" />
              <T i="pick" l="拾取构件" />
            </div>
            <div className="w-[422px] h-[26px] ml-[74px] bg-[#f7f7f7] flex items-center shrink-0 pl-[4px]">
              <Grip />
              <T i="twop" l="两点" c="ml-[1px]" />
              <T i="para" l="平行" />
              <T i="angle" l="点角" c="-ml-[2px]" />
              <Dd c="ml-[3px]" />
              <T i="arcx" l="三点辅轴" c="ml-[2px]" />
              <Dd c="ml-[2px]" />
              <T i="brush" l="删除辅轴" c="ml-[1px]" />
              <T i="dim" l="尺寸标注" />
              <Dd c="ml-[2px]" />
            </div>
          </div>
          <div className="h-[26px] mt-[3px] flex items-center shrink-0">
            <div className="w-[490px] h-[26px] bg-[#f7f7f7] flex items-center shrink-0 pl-[2px]">
              <Grip />
              <T i="cursor" l="选择" box c="ml-[3px] w-[51px] !gap-[2px] pl-[4px]" />
              <Dd c="ml-[3px]" />
              <Sep c="ml-[5px]" />
              <T i="line" l="直线" c="ml-[3px]" />
              <T i="ptlen" l="点加长度" c="-ml-[1px]" />
              <T i="arc" l="三点画弧" c="-ml-[1px]" />
              <Dd c="ml-[2px]" />
              <Combo t="" c="w-[54px] ml-[3px]" dd="mr-[3px]" />
              <T i="rect" l="矩形" c="ml-[4px]" />
              <Sep c="ml-[3px]" />
              <T i="smart" l="智能布置" c="ml-[1px] !pr-[2px]" />
              <Dd c="ml-[1px]" />
            </div>
            <div className="w-[28px] h-[26px] ml-[4px] bg-[#f7f7f7] flex items-center pl-[1px]"><Grip /></div>
          </div>
          <div className="h-[2px] shrink-0" />
          <Canvas />
          <SnapBar />
          <div className="h-[4px] shrink-0" />
          <RebarBar />
          <Table />
        </div>
      </div>
      <Status />
      <Taskbar />
      <SogouBar />
    </div>
  );
}
